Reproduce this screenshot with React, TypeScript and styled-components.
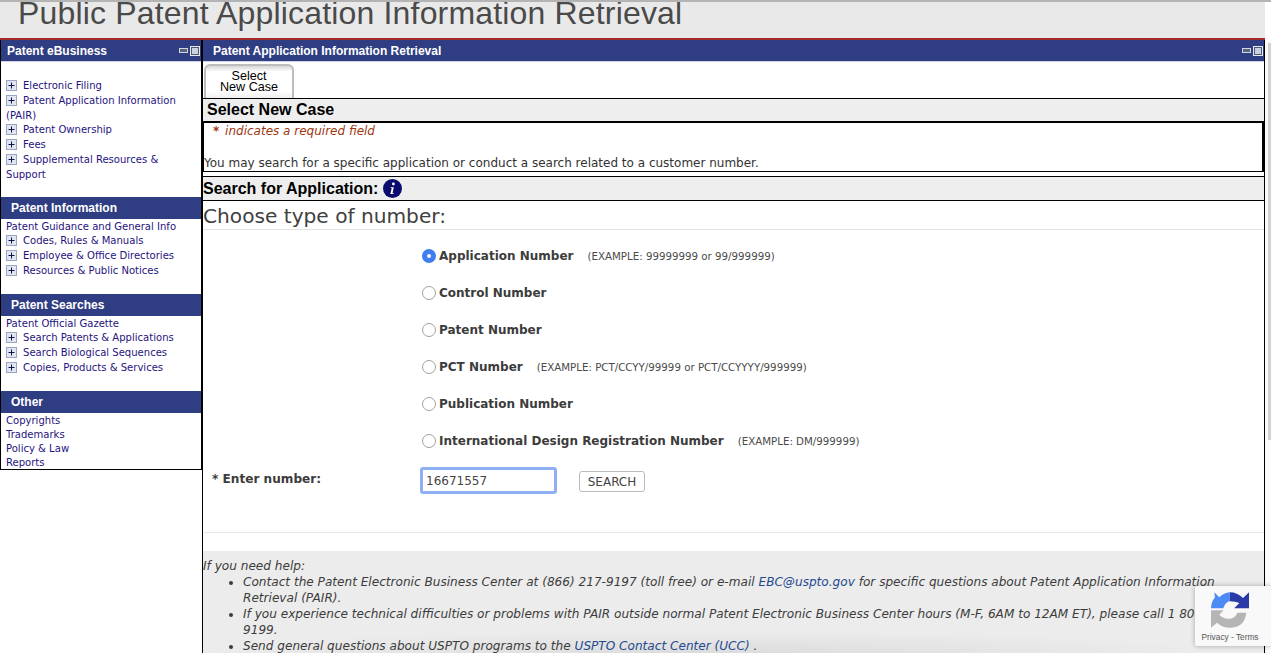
import React from "react";
import styled, { createGlobalStyle } from "styled-components";

const Global = createGlobalStyle`
  html, body { margin: 0; padding: 0; height: 653px; overflow: hidden; background: #fff; }
  #root { height: 653px; overflow: hidden; position: relative; }
  * { box-sizing: border-box; }
`;
const Page = styled.div`
  width: 1271px; height: 653px; overflow: hidden; display: flex; flex-direction: column;
  font-family: "DejaVu Sans", Verdana, sans-serif; color: #333;
`;
const TopLine = styled.div`height: 2px; flex: none; background: #b4b4b4;`;
const Banner = styled.header`
  height: 38px; flex: none; background: #e9e9e9;
  border-bottom: 2px solid #a52a2a; margin-right: 6px; overflow: hidden; padding-left: 18px;
`;
const Title = styled.h1`
  margin: -9px 0 0; font: 400 32px/40px "Liberation Sans", Arial, sans-serif; color: #4a4a4a; letter-spacing: 0.17px;
`;
const Body = styled.div`display: flex; flex: 1; min-height: 0; align-items: flex-start;`;
const Side = styled.aside`
  width: 203px; flex: none; height: 430px; border-left: 1px solid #000; border-right: 2px solid #000;
  border-bottom: 1px solid #000; background: #fff;
`;
const PanelBar = styled.div<{ $indent?: number }>`
  height: 22px; flex: none; background: #2f3e82; color: #fff; display: flex; align-items: center; justify-content: space-between;
  padding: 0 1px 0 ${p => p.$indent ?? 6}px; font: 700 12px "Liberation Sans", Arial, sans-serif; border-bottom: 1px solid #cfd3e4;
`;
const SectionBar = styled.div`
  height: 22px; background: #2f3e82; color: #fff; display: flex; align-items: center; padding-left: 10px;
  font: 700 12px "Liberation Sans", Arial, sans-serif;
`;
const Controls = styled.span`display: flex; align-items: center; gap: 2px; svg { display: block; }`;
const Nav = styled.nav<{ $h: number; $top?: number; $lh?: number }>`
  height: ${p => p.$h}px; padding: ${p => p.$top ?? 0.6}px 5px 0 5px; font-size: 10.05px; line-height: ${p => p.$lh ?? 14.8}px; color: #1f1480;
`;
const NavItem = styled.div``;
const Plus = styled.svg`width: 11px; height: 11px; margin-right: 6px; vertical-align: -2px;`;
const Main = styled.main`
  width: 1063px; flex: none; height: 613px; border-left: 1px solid #000; border-right: 1px solid #000; background: #fff; overflow: hidden;
  display: flex; flex-direction: column; margin-left: -1px;
`;
const Tabs = styled.div`height: 36px; flex: none; padding: 2px 0 0 1px; display: flex; align-items: flex-end;`;
const Tab = styled.div`
  width: 90px; height: 34px; border: 2px solid #bdbdbd; border-bottom: none; border-radius: 6px 6px 0 0; text-align: center;
  background: linear-gradient(#d8d8d8, #fff 18%, #fff 80%, #efefef);
  font: 400 12.6px/11px "Liberation Sans", Arial, sans-serif; color: #000; padding-top: 5px;
`;
const CaseTitle = styled.div`
  height: 23px; flex: none; border-top: 1px solid #000; background: #eee; color: #000; padding-left: 4px;
  font: 700 16px/21px "Liberation Sans", Arial, sans-serif;
`;
const Required = styled.div`
  height: 51px; flex: none; border: 1px solid #000; border-width: 2px 2px 1px 1px; font-size: 12px;
  display: flex; flex-direction: column; justify-content: space-between; color: #333; line-height: 14px;
`;
const Note = styled.em`color: #a0360f; padding: 1px 0 0 9px; font-style: italic;`;
const Star = styled.b`font-style: normal; margin-right: 2px;`;
const Intro = styled.span`padding-bottom: 1px;`;
const Gap = styled.div`height: 4px; flex: none;`;
const SearchTitle = styled.div`
  height: 25px; flex: none; border-top: 1px solid #000; border-bottom: 1px solid #000; background: #eee; color: #000;
  font: 700 16px/20px "Liberation Sans", Arial, sans-serif; display: flex; align-items: center; gap: 5px;
`;
const Choose = styled.div`
  height: 29px; flex: none; border-bottom: 1px solid #e3e3e3; font-size: 20.15px; line-height: 30px; color: #404040;
`;
const Options = styled.div`padding: 7px 0 0 219px; flex: none;`;
const OptionRow = styled.label`height: 37px; display: flex; align-items: center; gap: 3px; font-size: 12px; font-weight: 700; color: #3c3c3c;`;
const Radio = styled.span<{ $on?: boolean }>`
  width: 14px; height: 14px; border-radius: 50%; flex: none; background: #fff;
  border: ${p => p.$on ? "5px solid #3f7ef0" : "1px solid #a0a0a0"};
`;
const Example = styled.span`font-size: 10.25px; font-weight: 400; margin-left: 11px; color: #4a4a4a;`;
const EnterRow = styled.div`display: flex; height: 50px; flex: none; align-items: flex-start;`;
const EnterLabel = styled.div`width: 217px; padding: 13px 0 0 9px; font-size: 12.1px; font-weight: 700; color: #3c3c3c;`;
const NumberBox = styled.input`
  width: 137px; height: 27px; margin-top: 8px; border: 3px solid #8fb0f5; border-radius: 3px; padding: 0 3px; outline: none;
  font: 400 12px "DejaVu Sans", sans-serif; color: #444; background: #fff;
`;
const SearchBtn = styled.button`
  width: 66px; height: 21px; margin: 12px 0 0 22px; border: 1px solid #bcbcbc; border-radius: 3px; background: #fff;
  font: 400 12px "DejaVu Sans", sans-serif; color: #444; padding: 0;
`;
const Rule = styled.div`height: 1px; flex: none; background: #e8e8e8; margin-top: 23px;`;
const Help = styled.section`
  margin-top: 18px; flex: 1; min-height: 0; overflow: hidden;
  background: radial-gradient(ellipse 520px 22px at 500px 100%, #dcdcdc, rgba(220,220,220,0)), #ececec;
  padding-top: 7px; font-size: 12.1px; font-style: italic; line-height: 16px; color: #3c3c3c;
`;
const HelpList = styled.ul`margin: 0; padding: 0 0 0 40px;`;
const HelpLink = styled.span`color: #1f4a8f;`;
const Scroll = styled.div`width: 6px; flex: none; height: 613px; background: #fbfbfb; position: relative;`;
const Thumb = styled.div`position: absolute; right: 0; top: 3px; width: 3px; height: 397px; background: #d2d2d2;`;
const Badge = styled.div`
  position: absolute; right: 0; top: 586px; width: 76px; height: 60px; background: #f9f9f9; border-radius: 2px 0 0 2px;
  box-shadow: 0 0 5px rgba(0,0,0,.3); display: flex; flex-direction: column; align-items: center; padding: 6px 6px 0 0;
`;
const BadgeText = styled.div`font: 400 8.3px "Liberation Sans", Arial, sans-serif; color: #555; margin-top: 4px; white-space: nowrap;`;

const PlusIcon = () => (
  <Plus viewBox="0 0 11 11">
    <rect x=".5" y=".5" width="10" height="10" fill="#dfe6f0" stroke="#9aa6bf" />
    <path d="M5.5 2.5v6M2.5 5.5h6" stroke="#12124d" strokeWidth="1" />
  </Plus>
);
const WinIcons = () => (
  <Controls>
    <svg width="9" height="5" viewBox="0 0 9 5"><rect x=".5" y=".5" width="8" height="4" fill="#5b6478" stroke="#cfd6e4" /></svg>
    <svg width="10" height="10" viewBox="0 0 10 10"><rect x=".5" y=".5" width="9" height="9" fill="#c6d0de" stroke="#e4e8ef" /><rect x="1.5" y="1.5" width="7" height="7" fill="#c6d0de" stroke="#4f5a70" /></svg>
  </Controls>
);
const Item = ({ children }: { children: React.ReactNode }) => (
  <NavItem><PlusIcon />{children}</NavItem>
);
const opts: [string, string?][] = [
  ["Application Number", "(EXAMPLE: 99999999 or 99/999999)"],
  ["Control Number"],
  ["Patent Number"],
  ["PCT Number", "(EXAMPLE: PCT/CCYY/99999 or PCT/CCYYYY/999999)"],
  ["Publication Number"],
  ["International Design Registration Number", "(EXAMPLE: DM/999999)"],
];

export default function App() {
  return (
    <Page>
      <Global />
      <TopLine />
      <Banner><Title>Public Patent Application Information Retrieval</Title></Banner>
      <Body>
        <Side>
          <PanelBar><span>Patent eBusiness</span><WinIcons /></PanelBar>
          <Nav $h={135} $top={17}>
            <Item>Electronic Filing</Item>
            <Item>Patent Application Information (PAIR)</Item>
            <Item>Patent Ownership</Item>
            <Item>Fees</Item>
            <Item>Supplemental Resources &amp; Support</Item>
          </Nav>
          <SectionBar>Patent Information</SectionBar>
          <Nav $h={75}>
            <NavItem>Patent Guidance and General Info</NavItem>
            <Item>Codes, Rules &amp; Manuals</Item>
            <Item>Employee &amp; Office Directories</Item>
            <Item>Resources &amp; Public Notices</Item>
          </Nav>
          <SectionBar>Patent Searches</SectionBar>
          <Nav $h={75}>
            <NavItem>Patent Official Gazette</NavItem>
            <Item>Search Patents &amp; Applications</Item>
            <Item>Search Biological Sequences</Item>
            <Item>Copies, Products &amp; Services</Item>
          </Nav>
          <SectionBar>Other</SectionBar>
          <Nav $h={56} $lh={14} $top={1}>
            <NavItem>Copyrights</NavItem>
            <NavItem>Trademarks</NavItem>
            <NavItem>Policy &amp; Law</NavItem>
            <NavItem>Reports</NavItem>
          </Nav>
        </Side>
        <Main>
          <PanelBar $indent={10}><span>Patent Application Information Retrieval</span><WinIcons /></PanelBar>
          <Tabs><Tab>Select<br />New Case</Tab></Tabs>
          <CaseTitle>Select New Case</CaseTitle>
          <Required>
            <Note><Star>*</Star> indicates a required field</Note>
            <Intro>You may search for a specific application or conduct a search related to a customer number.</Intro>
          </Required>
          <Gap />
          <SearchTitle>
            Search for Application:
            <svg width="19" height="19" viewBox="0 0 19 19"><circle cx="9.5" cy="9.5" r="9.5" fill="#0c0c6e" /><circle cx="10.4" cy="5" r="1.4" fill="#fff" /><path d="M7.6 8.2h3.2l-1.3 6h1.3v.9H7.4l1.3-6H7.6z" fill="#fff" /></svg>
          </SearchTitle>
          <Choose>Choose type of number:</Choose>
          <Options>
            {opts.map(([label, ex], i) => (
              <OptionRow key={label}>
                <Radio $on={i === 0} />
                {label}
                {ex && <Example>{ex}</Example>}
              </OptionRow>
            ))}
          </Options>
          <EnterRow>
            <EnterLabel>* Enter number:</EnterLabel>
            <NumberBox defaultValue="16671557" />
            <SearchBtn>SEARCH</SearchBtn>
          </EnterRow>
          <Rule />
          <Help>
            If you need help:
            <HelpList>
              <li>Contact the Patent Electronic Business Center at (866) 217-9197 (toll free) or e-mail <HelpLink>EBC@uspto.gov</HelpLink> for specific questions about Patent Application Information Retrieval (PAIR).</li>
              <li>If you experience technical difficulties or problems with PAIR outside normal Patent Electronic Business Center hours (M-F, 6AM to 12AM ET), please call 1 800-972-9199.</li>
              <li>Send general questions about USPTO programs to the <HelpLink>USPTO Contact Center (UCC)</HelpLink> .</li>
            </HelpList>
          </Help>
        </Main>
        <Scroll><Thumb /></Scroll>
      </Body>
      <Badge>
        <svg width="38" height="36" viewBox="48 28 115 107">
          <path d="M58 28L73 43Q87 30 105 28L105 55Q92 56 85 76L48 76Q49 56 60 44Z" fill="#4c8bf5" />
          <path d="M105 28Q127 28 145 45L163 28L163 76L118 76L134 60Q122 55 105 55Z" fill="#2a3ba8" />
          <path d="M48 82L86 82L73 96Q85 110 105 108Q120 108 128 90L155 90Q150 135 105 135Q82 135 66 120L48 135Z" fill="#b5b5b5" />
        </svg>
        <BadgeText>Privacy - Terms</BadgeText>
      </Badge>
    </Page>
  );
}
